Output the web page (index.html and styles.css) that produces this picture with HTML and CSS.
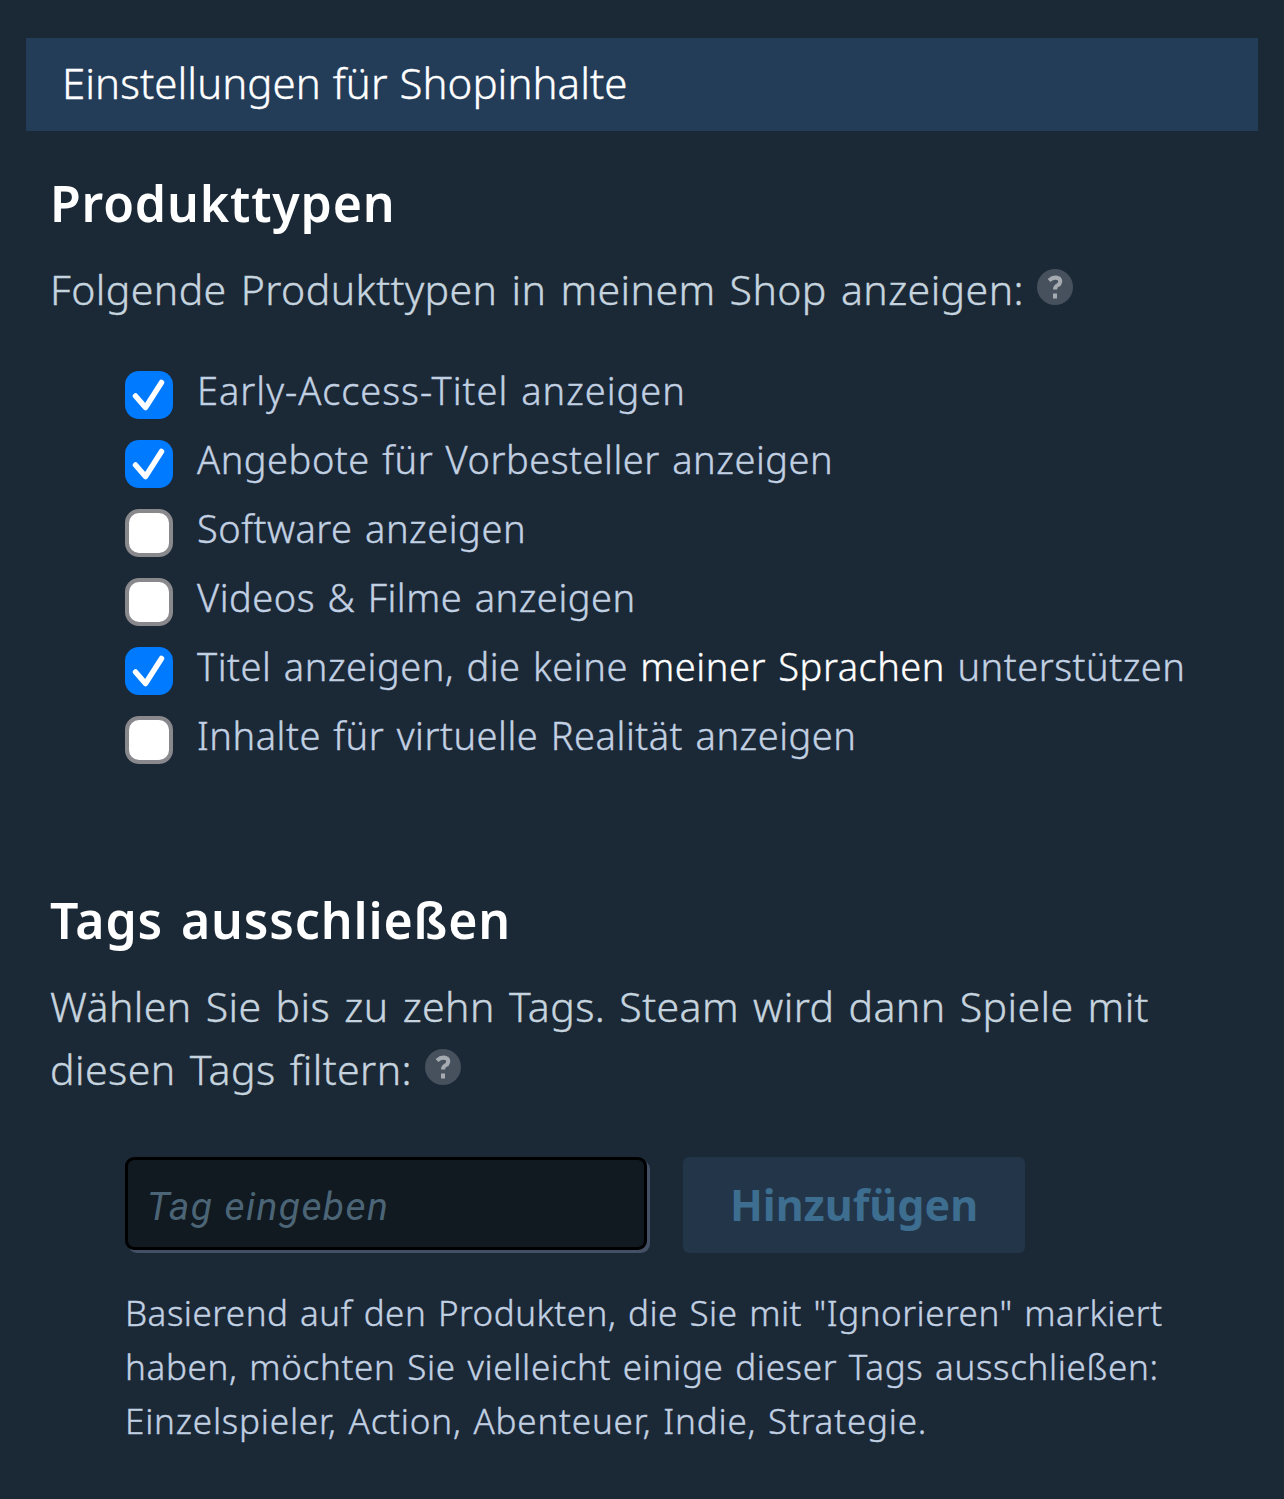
FILE: index.html
```
<!DOCTYPE html>
<html lang="de">
  <head>
    <meta charset="UTF-8" />
    <meta name="viewport" content="width=device-width, initial-scale=1.0" />
    <title>Einstellungen für Shopinhalte</title>
    <link rel="stylesheet" href="styles.css">
  </head>
  <body>
    <div class="page-title">Einstellungen für Shopinhalte</div>

    <section class="products">
      <h2>Produkttypen</h2>
      <p class="description">Folgende Produkttypen in meinem Shop anzeigen:
        <svg class="help" viewBox="0 0 36 36"><circle cx="18" cy="18" r="18" /><path d="M12 11.500Q17 7 22 9.500Q24.500 12 22 15.500Q18 17 18 20.500M18 24.500v5" /></svg>
      </p>
      <div class="options">
        <label class="option"><input type="checkbox" class="check" checked><span>Early-Access-Titel anzeigen</span></label>
        <label class="option"><input type="checkbox" class="check" checked><span>Angebote für Vorbesteller anzeigen</span></label>
        <label class="option"><input type="checkbox" class="check"><span>Software anzeigen</span></label>
        <label class="option"><input type="checkbox" class="check"><span>Videos &amp; Filme anzeigen</span></label>
        <label class="option"><input type="checkbox" class="check" checked><span>Titel anzeigen, die keine <a class="languages">meiner Sprachen</a> unterstützen</span></label>
        <label class="option"><input type="checkbox" class="check"><span>Inhalte für virtuelle Realität anzeigen</span></label>
      </div>
    </section>

    <section class="tags">
      <h2>Tags ausschließen</h2>
      <p class="description">Wählen Sie bis zu zehn Tags. Steam wird dann Spiele mit<br>diesen Tags filtern:
        <svg class="help" viewBox="0 0 36 36"><circle cx="18" cy="18" r="18" /><path d="M12 11.500Q17 7 22 9.500Q24.500 12 22 15.500Q18 17 18 20.500M18 24.500v5" /></svg>
      </p>
      <form class="tag-form">
        <input type="text" class="text-input" placeholder="Tag eingeben">
        <button type="button" class="add-button">Hinzufügen</button>
      </form>
      <p class="hint">
        Basierend auf den Produkten, die Sie mit "Ignorieren" markiert<br>
        <span class="hint-question">haben, möchten Sie vielleicht einige dieser Tags ausschließen:</span><br>
        <span class="hint-tags">Einzelspieler, Action, Abenteuer, Indie, Strategie.</span>
      </p>
    </section>
  </body>
</html>
```
FILE: styles.css
```
* {
  box-sizing: border-box;
}
body {
  margin: 0;
  padding: 38px 26px 0;
  background: #1b2836;
  color: #c6d4df;
  font-family: "Noto Sans", sans-serif;
  font-weight: 300;
  white-space: nowrap;
  -webkit-text-stroke: 0.4px;
}
.page-title {
  height: 93px;
  padding: 15px 36px 0;
  background: #233c58;
  color: #fff;
  font-size: 42px;
  line-height: 60px;
  letter-spacing: 0.05px;
  word-spacing: 1px;
}
section {
  padding: 0 24px;
}
.products {
  padding-top: 42px;
}
.tags {
  padding-top: 121px;
}
h2 {
  margin: 0 0 25px;
  color: #fff;
  font-size: 50px;
  font-weight: 600;
  line-height: 60px;
  letter-spacing: 0.85px;
  word-spacing: 4px;
  -webkit-text-stroke: 0;
}
.description {
  margin: 0;
  font-size: 41px;
  line-height: 63px;
  letter-spacing: 0.42px;
  word-spacing: 3px;
}
.help {
  width: 36px;
  height: 36px;
  margin-left: -1px;
}
.help circle {
  fill: #47515d;
}
.help path {
  fill: none;
  stroke: #a5abb1;
  stroke-width: 4;
}
.options {
  margin-top: 34px;
  padding-left: 75px;
}
.option {
  display: flex;
  gap: 24px;
  height: 69px;
  color: #c1d0e2;
  font-size: 38px;
  line-height: 70px;
  letter-spacing: 0.53px;
  word-spacing: 2px;
}
.option:first-child {
  letter-spacing: 0.98px;
}
.check {
  appearance: none;
  flex: none;
  width: 48px;
  height: 48px;
  margin: 16px 0 0;
  border: 4px solid #89888d;
  border-radius: 14px;
  background: #fff;
}
.check:checked {
  border: 0;
  background: #007aff url("data:image/svg+xml,%3Csvg xmlns='http://www.w3.org/2000/svg' viewBox='0 0 48 48'%3E%3Cpath d='M10.500 25L20.500 36.500L36.500 11.500' fill='none' stroke='white' stroke-width='5.5' stroke-linecap='round' stroke-linejoin='round'/%3E%3C/svg%3E");
}
.languages {
  color: #fff;
}
.tag-form {
  display: flex;
  gap: 36px;
  margin: 56px 0 0 75px;
}
.text-input {
  width: 522px;
  height: 93px;
  padding: 6px 19px 0;
  border: 3px solid #000;
  border-radius: 9px;
  background: #111921;
  box-shadow: 3px 3px 0 #434f64;
  font-family: Roboto, sans-serif;
  font-size: 39px;
  font-style: italic;
  letter-spacing: 1.4px;
  -webkit-text-stroke: 0;
}
.text-input::placeholder {
  color: #4b6576;
}
.add-button {
  width: 342px;
  height: 96px;
  padding: 0 0 2px;
  border: 0;
  border-radius: 6px;
  background: #233549;
  color: #3d6d8f;
  font-family: "Noto Sans", sans-serif;
  font-size: 43px;
  font-weight: 700;
  -webkit-text-stroke: 0;
}
.hint {
  margin: 33px 0 0 75px;
  color: #c1d0e2;
  font-size: 35px;
  line-height: 54px;
  letter-spacing: 0.5px;
  word-spacing: 2px;
}
.hint-question {
  letter-spacing: 0.65px;
}
.hint-tags {
  letter-spacing: 0.8px;
}
```
